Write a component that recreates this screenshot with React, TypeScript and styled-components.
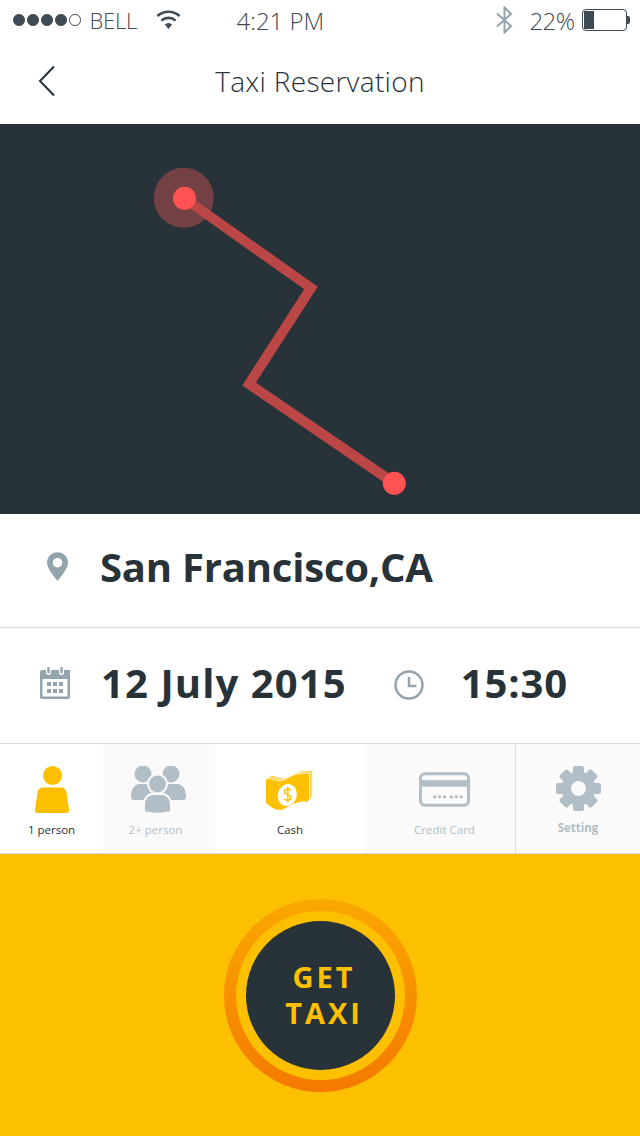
import React from "react";
import styled, { createGlobalStyle } from "styled-components";

const Global = createGlobalStyle`
  html, body { margin: 0; padding: 0; background: #fff; }
  * { box-sizing: border-box; }
  body { font-family: "Open Sans", "Noto Sans", sans-serif; color: #283239; }
`;

const Page = styled.div`
  width: 640px;
  height: 1136px;
  display: flex;
  flex-direction: column;
  overflow: hidden;
`;

const StatusBar = styled.div`
  height: 40px;
  display: flex;
  align-items: center;
  padding: 0 13px;
  font-size: 24px;
  font-weight: 300;
  color: #3f4a52;
  white-space: nowrap;
  & > * { flex: none; }
`;
const Dots = styled.div`
  display: flex;
  gap: 2.5px;
  margin-right: 9px;
`;
const Dot = styled.span<{ $empty?: boolean }>`
  width: 11.5px;
  height: 11.5px;
  border-radius: 50%;
  background: ${(p) => (p.$empty ? "#fff" : "#3f4a52")};
  border: 1px solid #3f4a52;
`;
const Carrier = styled.span`
  width: 66px;
  font-size: 22px;
  letter-spacing: -0.2px;
`;
const Clock = styled.span`
  margin-left: 56px;
  width: 259px;
`;
const Percent = styled.span`
  margin-left: 17px;
  width: 52px;
  letter-spacing: -0.6px;
`;
const Battery = styled.div`
  position: relative;
  width: 45px;
  height: 22px;
  border: 1px solid #3f4a52;
  border-radius: 4px;
  padding: 1px;
  &::after {
    content: "";
    position: absolute;
    right: -4px;
    top: 6px;
    width: 3px;
    height: 8px;
    border-radius: 0 2px 2px 0;
    background: #3f4a52;
  }
`;
const BatteryLevel = styled.div`
  width: 10px;
  height: 100%;
  background: #3f4a52;
`;

const NavBar = styled.div`
  position: relative;
  height: 84px;
  display: flex;
  align-items: center;
  justify-content: center;
`;
const BackIcon = styled.svg`
  position: absolute;
  left: 37px;
  top: 25px;
`;
const Title = styled.h1`
  margin: 0 0 3px;
  font-size: 28px;
  font-weight: 300;
  letter-spacing: 0.3px;
  color: #283239;
`;

const MapPanel = styled.div`
  height: 390px;
  background: #283239;
  svg { display: block; }
`;

const Row = styled.div<{ $height: number; $lift: number }>`
  height: ${(p) => p.$height}px;
  padding-bottom: ${(p) => p.$lift}px;
  display: flex;
  align-items: center;
  border-bottom: 1px solid #dcdcdc;
`;
const BigText = styled.span<{ $spacing: number }>`
  font-size: 40px;
  font-weight: 700;
  letter-spacing: ${(p) => p.$spacing}px;
  color: #283239;
`;
const PlaceIcon = styled.svg`
  margin: 0 32px 0 47px;
  flex: none;
`;
const CalendarIcon = styled.svg`
  margin: 0 31px 0 40px;
  flex: none;
`;
const ClockIcon = styled.svg`
  margin: 4px 37px 0 47px;
  flex: none;
`;

const Tabs = styled.div`
  height: 110px;
  display: flex;
  border-bottom: 1px solid #dcdcdc;
`;
const Tab = styled.div<{ $w: number; $muted?: boolean; $divider?: boolean }>`
  width: ${(p) => p.$w}px;
  flex: none;
  background: ${(p) => (p.$muted ? "#fafafa" : "#fff")};
  border-left: ${(p) => (p.$divider ? "1px solid #dcdcdc" : "none")};
  display: flex;
  flex-direction: column;
  align-items: center;
`;
const TabIcon = styled.div<{ $top: number; $shift?: number }>`
  height: 78px;
  padding-top: ${(p) => p.$top}px;
  margin-left: ${(p) => p.$shift ?? 0}px;
  display: flex;
  align-items: flex-start;
  justify-content: center;
  svg { display: block; }
`;
const TabLabel = styled.span<{ $muted?: boolean; $bold?: boolean; $shift?: number }>`
  font-size: 11.5px;
  font-weight: ${(p) => (p.$bold ? 700 : 400)};
  color: ${(p) => (p.$muted ? "#b1bec5" : "#283239")};
  line-height: 16px;
  margin-top: ${(p) => (p.$bold ? "-2px" : "0")};
  margin-left: ${(p) => p.$shift ?? 0}px;
`;

const Action = styled.div`
  flex: 1;
  background: #fdc000;
  display: flex;
  justify-content: center;
  padding-top: 45px;
`;
const Ring = styled.div`
  width: 193px;
  height: 193px;
  border-radius: 50%;
  background: linear-gradient(180deg, #faa800 0%, #f47900 100%);
  display: flex;
  align-items: center;
  justify-content: center;
`;
const RingGap = styled.div`
  width: 169px;
  height: 169px;
  border-radius: 50%;
  background: #fdc000;
  display: flex;
  align-items: center;
  justify-content: center;
`;
const GetTaxi = styled.button`
  width: 149px;
  height: 149px;
  border-radius: 50%;
  border: none;
  padding: 0 0 1px 8px;
  background: #283239;
  color: #fdc000;
  font-family: inherit;
  font-size: 29px;
  font-weight: 700;
  line-height: 36px;
  letter-spacing: 3px;
`;

const Back = () => (
  <BackIcon width="20" height="32" viewBox="0 0 20 32" fill="none">
    <path d="M17 1.500 3 16l14 14.500" stroke="#283239" strokeWidth="2" />
  </BackIcon>
);

const Wifi = () => (
  <svg width="25" height="20" viewBox="0 0 25 20">
    <path d="M12.500 19 8.800 14.600a5.600 5.600 0 0 1 7.400 0Z" fill="#3f4a52" />
    <path d="M5.400 10.600a10.600 10.600 0 0 1 14.200 0" fill="none" stroke="#3f4a52" strokeWidth="2.600" />
    <path d="M1.400 6a16.600 16.600 0 0 1 22.200 0" fill="none" stroke="#3f4a52" strokeWidth="2.600" />
  </svg>
);

const Bluetooth = () => (
  <svg width="17" height="28" viewBox="0 0 17 28" fill="none">
    <path d="M1 7.500 15 20 8.500 26.500v-25L15 8 1 20.500" stroke="#95a5ae" strokeWidth="2" />
  </svg>
);

const Person = () => (
  <svg width="34" height="47" viewBox="0 0 34 47">
    <circle cx="17.500" cy="9.500" r="9.500" fill="#fdc000" />
    <path d="M8 21.500h18.500c3 0 4.500 2 5 5l2.500 17c.3 2-1 3.500-2.500 3.500H2.500C1 47-.3 45.500 0 43.500l2.500-17c.5-3 2.500-5 5.500-5Z" fill="#fdc000" />
  </svg>
);

const Group = () => (
  <svg width="55" height="47" viewBox="0 0 55 47">
    <circle cx="12" cy="8" r="8.500" fill="#b1bec5" />
    <circle cx="40" cy="8" r="8.500" fill="#b1bec5" />
    <path d="M0 31c0-8 3-12 8-13h10c4 0 7 2 8 3 1-1 4-3 8-3h13c5 1 8 5 8 13 0 2-1 3-3 3H3c-2 0-3-1-3-3Z" fill="#b1bec5" />
    <circle cx="26.500" cy="18" r="9.500" fill="#b1bec5" stroke="#fafafa" strokeWidth="2" />
    <path d="M13 46V39c0-7 4-11 9-11h9c5 0 9 4 9 11v7c-8 2-19 2-27 0Z" fill="#b1bec5" stroke="#fafafa" strokeWidth="2" />
  </svg>
);

const billPath = "M0 10C5 12 9 13.500 14 13 19 12 23 8 29 6.500 34 5.500 38 5.500 42 6V33C37 32 32 33 27 35 22 37 18 41 13 41 8 41 4 37 0 34Z";
const billLayers = [
  { x: 4.5, y: -4.2 },
  { x: 3, y: -2.8 },
  { x: 1.5, y: -1.4 },
];
const Cash = () => (
  <svg width="49" height="42" viewBox="0 0 49 42">
    {billLayers.map((l) => (
      <path key={l.x} d={billPath} fill="#fdc000" stroke="#fff" strokeWidth="0.8" transform={`translate(${l.x} ${l.y})`} />
    ))}
    <path d={billPath} fill="#fdc000" />
    <ellipse cx="21.300" cy="26" rx="9.500" ry="11" fill="#fff" transform="rotate(15 21.300 26)" />
    <path d="M25 21.500c-1.500-2-6.500-1.700-6.500 1.300 0 3.800 6.500 2 6.500 5.800 0 3-5 3.300-7 1.400M21.800 17.500v16" fill="none" stroke="#fdc000" strokeWidth="1.400" />
  </svg>
);

const Card = () => (
  <svg width="51" height="35" viewBox="0 0 52 35" fill="none">
    <rect x="1.500" y="1.500" width="49" height="32" rx="4.500" stroke="#b1bec5" strokeWidth="3" />
    <rect x="2" y="8" width="48" height="6.500" fill="#b1bec5" />
    <g fill="#b1bec5">
      <circle cx="16" cy="25" r="1.700" /><circle cx="21" cy="25" r="1.700" /><circle cx="26" cy="25" r="1.700" />
      <circle cx="33" cy="25" r="1.700" /><circle cx="38" cy="25" r="1.700" /><circle cx="43" cy="25" r="1.700" />
    </g>
  </svg>
);

const gearTeeth = Array.from({ length: 8 }, (_, i) => i * 45);
const Gear = () => (
  <svg width="45" height="45" viewBox="0 0 45 45" fill="#b1bec5">
    {gearTeeth.map((a) => (
      <rect key={a} x="17" y="0" width="11" height="10" rx="2" transform={`rotate(${a} 22.500 22.500)`} />
    ))}
    <path
      fillRule="evenodd"
      d="M22.500 5.500a17 17 0 1 0 0 34 17 17 0 0 0 0-34Zm0 9.500a7.500 7.500 0 1 1 0 15 7.500 7.500 0 0 1 0-15Z"
    />
  </svg>
);

export default function App() {
  return (
    <Page>
      <Global />
      <StatusBar>
        <Dots>
          <Dot /><Dot /><Dot /><Dot /><Dot $empty />
        </Dots>
        <Carrier>BELL</Carrier>
        <Wifi />
        <Clock>4:21 PM</Clock>
        <Bluetooth />
        <Percent>22%</Percent>
        <Battery><BatteryLevel /></Battery>
      </StatusBar>
      <NavBar>
        <Back />
        <Title>Taxi Reservation</Title>
      </NavBar>
      <MapPanel>
        <svg width="640" height="390" viewBox="0 124 640 390" fill="none">
          <circle cx="183.700" cy="197.700" r="30" fill="#734143" />
          <path d="M184 198 311 288 249 384 394 483" stroke="#bb4646" strokeWidth="10" />
          <circle cx="184.500" cy="198.300" r="11.500" fill="#ff5252" />
          <circle cx="394.300" cy="483.300" r="11.500" fill="#ff5252" />
        </svg>
      </MapPanel>
      <Row $height={114} $lift={8}>
        <PlaceIcon width="21" height="29" viewBox="0 0 22 30">
          <path
            fillRule="evenodd"
            fill="#94a4ad"
            d="M11 0C4.900 0 0 4.800 0 10.700 0 17 7 25 11 30c4-5 11-13 11-19.300C22 4.800 17.100 0 11 0Zm0 6a5 5 0 1 1 0 10 5 5 0 0 1 0-10Z"
          />
        </PlaceIcon>
        <BigText $spacing={-0.2}>San Francisco,CA</BigText>
      </Row>
      <Row $height={116} $lift={6}>
        <CalendarIcon width="30" height="32" viewBox="0 0 30 32" fill="#94a4ad">
          <path d="M2 3h28v27c0 1-1 2-2 2H2c-1 0-2-1-2-2V5c0-1 1-2 2-2Z" />
          <rect x="2.500" y="12" width="25" height="17.500" fill="#fff" />
          <rect x="6" y="-1" width="5" height="9" rx="2.500" fill="#fff" />
          <rect x="19" y="-1" width="5" height="9" rx="2.500" fill="#fff" />
          <rect x="7.250" y="0" width="2.500" height="6.500" rx="1" />
          <rect x="20.250" y="0" width="2.500" height="6.500" rx="1" />
          <rect x="7" y="15" width="4" height="4" /><rect x="13" y="15" width="4" height="4" /><rect x="19" y="15" width="4" height="4" />
          <rect x="7" y="22" width="4" height="4" /><rect x="13" y="22" width="4" height="4" /><rect x="19" y="22" width="4" height="4" />
        </CalendarIcon>
        <BigText $spacing={1.1}>12 July 2015</BigText>
        <ClockIcon width="30" height="30" viewBox="0 0 30 30" fill="none" stroke="#94a4ad" strokeWidth="2.500">
          <circle cx="15" cy="15" r="13.500" />
          <path d="M15 7v9h7.500" />
        </ClockIcon>
        <BigText $spacing={0.9}>15:30</BigText>
      </Row>
      <Tabs>
        <Tab $w={103}>
          <TabIcon $top={22}><Person /></TabIcon>
          <TabLabel>1 person</TabLabel>
        </Tab>
        <Tab $w={112} $muted>
          <TabIcon $top={22} $shift={-2}><Group /></TabIcon>
          <TabLabel $muted $shift={-7}>2+ person</TabLabel>
        </Tab>
        <Tab $w={150}>
          <TabIcon $top={25}><Cash /></TabIcon>
          <TabLabel>Cash</TabLabel>
        </Tab>
        <Tab $w={150} $muted>
          <TabIcon $top={28} $shift={9}><Card /></TabIcon>
          <TabLabel $muted $shift={9}>Credit Card</TabLabel>
        </Tab>
        <Tab $w={125} $muted $divider>
          <TabIcon $top={22}><Gear /></TabIcon>
          <TabLabel $muted $bold>Setting</TabLabel>
        </Tab>
      </Tabs>
      <Action>
        <Ring>
          <RingGap>
            <GetTaxi>GET<br />TAXI</GetTaxi>
          </RingGap>
        </Ring>
      </Action>
    </Page>
  );
}
